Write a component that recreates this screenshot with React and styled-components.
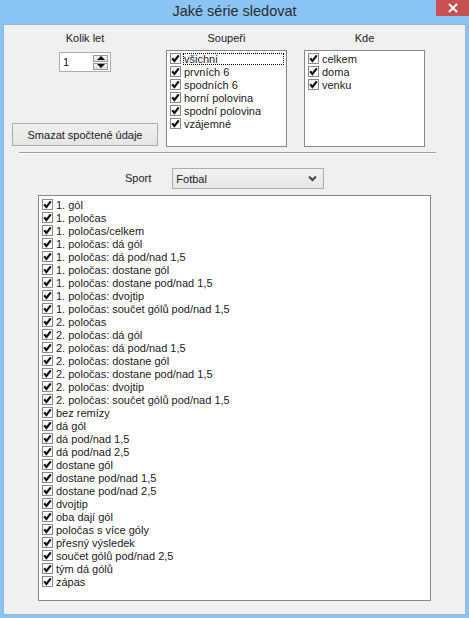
import React from 'react'
import styled, { createGlobalStyle } from 'styled-components'

const Global = createGlobalStyle`
  html, body { margin: 0; padding: 0; background: #fff; }
  body { font-family: "Liberation Sans", Arial, sans-serif; }
`

const souperi = ['všichni', 'prvních 6', 'spodních 6', 'horní polovina', 'spodní polovina', 'vzájemné']
const kde = ['celkem', 'doma', 'venku']
const serie = [
  '1. gól', '1. poločas', '1. poločas/celkem', '1. poločas: dá gól', '1. poločas: dá pod/nad 1,5',
  '1. poločas: dostane gól', '1. poločas: dostane pod/nad 1,5', '1. poločas: dvojtip',
  '1. poločas: součet gólů pod/nad 1,5', '2. poločas', '2. poločas: dá gól', '2. poločas: dá pod/nad 1,5',
  '2. poločas: dostane gól', '2. poločas: dostane pod/nad 1,5', '2. poločas: dvojtip',
  '2. poločas: součet gólů pod/nad 1,5', 'bez remízy', 'dá gól', 'dá pod/nad 1,5', 'dá pod/nad 2,5',
  'dostane gól', 'dostane pod/nad 1,5', 'dostane pod/nad 2,5', 'dvojtip', 'oba dají gól',
  'poločas s více góly', 'přesný výsledek', 'součet gólů pod/nad 2,5', 'tým dá gólů', 'zápas',
]

const Check = () => (
  <svg width="11" height="11" viewBox="0 0 11 11">
    <rect x="0.5" y="0.5" width="10" height="10" fill="#fff" stroke="#8a8a8a" />
    <path d="M2.2 5.3 L4.4 7.9 L8.8 2.4" fill="none" stroke="#111" strokeWidth="2.2" />
  </svg>
)

const CheckList = ({ items, focusFirst }) => (
  <>
    {items.map((t, i) => (
      <Item key={t}>
        <Check />
        <ItemText $focus={focusFirst && i === 0}>{t}</ItemText>
      </Item>
    ))}
  </>
)

const App = () => {
  return (
    <>
      <Global />
      <Window>
        <TitleBar>
          <span />
          <Title>Jaké série sledovat</Title>
          <Close>
            <svg width="10" height="10" viewBox="0 0 10 10">
              <path d="M1 1 L9 9 M9 1 L1 9" stroke="#fff" strokeWidth="2" />
            </svg>
          </Close>
        </TitleBar>
        <Client>
          <TopRow>
            <FirstCol>
              <Label>Kolik let</Label>
              <Spinner>
                <span>1</span>
                <SpinBtns>
                  <SpinBtn><Tri $up /></SpinBtn>
                  <SpinBtn><Tri /></SpinBtn>
                </SpinBtns>
              </Spinner>
              <Button>Smazat spočtené údaje</Button>
            </FirstCol>
            <ListCol $gap={8}>
              <Label>Soupeři</Label>
              <SmallList>
                <CheckList items={souperi} focusFirst />
              </SmallList>
            </ListCol>
            <ListCol $gap={17}>
              <Label>Kde</Label>
              <SmallList>
                <CheckList items={kde} />
              </SmallList>
            </ListCol>
          </TopRow>
          <Separator />
          <SportRow>
            <Label>Sport</Label>
            <Combo>
              <span>Fotbal</span>
              <svg width="9" height="7" viewBox="0 0 9 7">
                <path d="M1 1.5 L4.5 5 L8 1.5" fill="none" stroke="#444" strokeWidth="2" />
              </svg>
            </Combo>
          </SportRow>
          <BigList>
            <CheckList items={serie} />
          </BigList>
        </Client>
      </Window>
    </>
  )
}

export default App

const Window = styled.div`
  width: 469px;
  height: 618px;
  background: #89c4f4;
  display: flex;
  flex-direction: column;
  box-sizing: border-box;
  padding: 0 3px 3px;
`

const TitleBar = styled.div`
  height: 24px;
  display: grid;
  grid-template-columns: 30px 1fr 30px;
  align-items: start;
`

const Title = styled.div`
  text-align: center;
  font-size: 14.5px;
  color: #2a2a2a;
  line-height: 17px;
  padding-top: 3px;
`

const Close = styled.div`
  height: 16px;
  background: #c75050;
  display: flex;
  align-items: center;
  justify-content: center;
  margin-right: -3px;
`

const Client = styled.div`
  flex: 1;
  background: #f0f0f0;
  border: 1px solid #9fb4c9;
  font-size: 11px;
  color: #1a1a1a;
  display: flex;
  flex-direction: column;
`

const TopRow = styled.div`
  display: flex;
  padding: 7px 0 0 8px;
`

const Label = styled.div`
  font-size: 11px;
  line-height: 13px;
  color: #222;
  text-align: center;
`

const FirstCol = styled.div`
  width: 146px;
  display: flex;
  flex-direction: column;
  align-items: center;
`

const Spinner = styled.div`
  margin-top: 7px;
  width: 52px;
  height: 20px;
  box-sizing: border-box;
  border: 1px solid #abadb3;
  background: #fff;
  display: flex;
  align-items: center;
  justify-content: space-between;
  padding: 0 2px 0 3px;
  span { line-height: 13px; color: #10103a; }
`

const SpinBtns = styled.div`
  display: flex;
  flex-direction: column;
  gap: 1px;
`

const SpinBtn = styled.div`
  width: 15px;
  height: 7px;
  box-sizing: border-box;
  border: 1px solid #9a9a9a;
  background: linear-gradient(#f4f4f4, #dcdcdc);
  display: flex;
  align-items: center;
  justify-content: center;
`

const Tri = styled.div`
  width: 0;
  height: 0;
  border-left: 4px solid transparent;
  border-right: 4px solid transparent;
  ${p => p.$up ? 'border-bottom: 4px solid #000;' : 'border-top: 4px solid #000;'}
`

const Button = styled.div`
  margin-top: auto;
  margin-bottom: 1px;
  width: 146px;
  height: 23px;
  box-sizing: border-box;
  border: 1px solid #acacac;
  background: linear-gradient(#f0f0f0, #e5e5e5);
  display: flex;
  align-items: center;
  justify-content: center;
  color: #1a1a1a;
`

const ListCol = styled.div`
  width: 121px;
  margin-left: ${p => p.$gap}px;
  display: flex;
  flex-direction: column;
`

const SmallList = styled.div`
  margin-top: 5px;
  height: 97px;
  box-sizing: border-box;
  border: 1px solid #828790;
  background: #fff;
  padding: 1px 2px 0 3px;
`

const Item = styled.div`
  height: 13px;
  display: flex;
  align-items: center;
  white-space: nowrap;
  svg { flex: none; }
`

const ItemText = styled.span`
  margin-left: 2px;
  line-height: 12px;
  padding-left: 1px;
  ${p => p.$focus && 'flex: 1; outline: 1px dotted #000; outline-offset: -1px;'}
`

const Separator = styled.div`
  margin: 5px 29px 0 15px;
  border-top: 1px solid #a0a0a0;
  border-bottom: 1px solid #fff;
`

const SportRow = styled.div`
  margin-top: 14px;
  padding-left: 121px;
  display: flex;
  align-items: center;
  gap: 21px;
`

const Combo = styled.div`
  width: 152px;
  height: 21px;
  box-sizing: border-box;
  border: 1px solid #acacac;
  background: linear-gradient(#f2f2f2, #e5e5e5);
  display: flex;
  align-items: center;
  justify-content: space-between;
  padding: 0 6px 0 3px;
`

const BigList = styled.div`
  margin: 6px 0 0 34px;
  width: 393px;
  height: 406px;
  box-sizing: border-box;
  border: 1px solid #828790;
  background: #fff;
  padding: 2px 0 0 3px;
`
